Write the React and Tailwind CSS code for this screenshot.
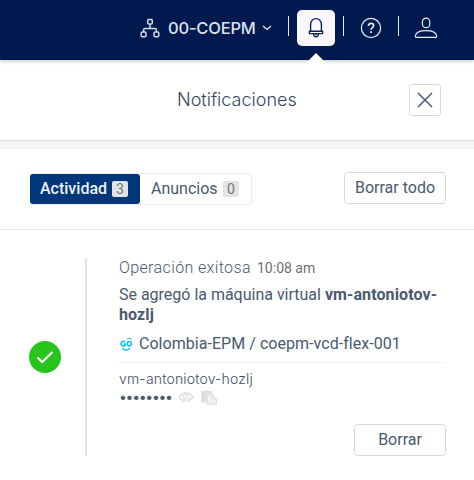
import React from "react";

function OrgIcon() {
  return (
    <svg className="h-5 w-5" viewBox="0 0 20 20" fill="none" stroke="#d6dae6" strokeWidth="1.5">
      <rect x="7.7" y="1.500" width="4.6" height="4.6" rx="1" />
      <rect x="1.2" y="14" width="4.8" height="4.8" rx="1.2" />
      <rect x="14" y="14" width="4.8" height="4.8" rx="1.2" />
      <path d="M10 6.100v4.2M3.6 14v-2c0-1 .5-1.5 1.500-1.500h9.800c1 0 1.500.5 1.500 1.500v2" />
    </svg>
  );
}

function BellIcon() {
  return (
    <svg className="h-[22px] w-4" viewBox="0 0 16 22" fill="none" stroke="#0c2457" strokeWidth="1.400">
      <path d="M2.600 14V7a5.400 5.400 0 0 1 10.800 0v7" />
      <rect x="1.300" y="14.200" width="13.400" height="2.400" rx=".5" />
      <path d="M5.500 17c.2 1.800 1.200 2.800 2.500 2.800s2.300-1 2.500-2.800" />
      <path d="M8 17v1.200" />
    </svg>
  );
}

function HelpIcon() {
  return (
    <svg className="h-[22px] w-[22px]" viewBox="0 0 22 22" fill="none" stroke="#e9ebf2">
      <circle cx="11" cy="11" r="9.600" strokeWidth="1.200" />
      <path d="M8.400 8.900c0-1.600 1.100-2.500 2.600-2.500s2.600.9 2.600 2.200c0 2-2.500 2-2.500 4.200" strokeWidth="1.700" />
      <path d="M11.100 14.300v1.700" strokeWidth="1.800" />
    </svg>
  );
}

function UserIcon() {
  return (
    <svg className="h-[22px] w-6" viewBox="0 0 24 22" fill="none" stroke="#e9ebf2" strokeWidth="1.200">
      <rect x="8.400" y="1.200" width="7.400" height="9.400" rx="3.700" />
      <path d="M2.200 20.300c-.7 0-.9-.5-.8-1.300.4-3.600 4.800-5.400 10.600-5.400s10.200 1.800 10.600 5.400c.1.800-.1 1.300-.8 1.300z" />
    </svg>
  );
}

function GoIcon() {
  return (
    <svg className="h-4 w-[14px] shrink-0" viewBox="0 0 14 16" fill="none" stroke="#10c4f6" strokeWidth="1.500">
      <path d="M6.200 6C4.500 4.700 2 5.300 2 7.800c0 2.600 3 2.900 4.200 1.900V8H4.300" />
      <ellipse cx="10.300" cy="7.800" rx="2.100" ry="2.200" />
      <path d="M8.200 3.600c.9-1.900 3.400-1.900 4.300 0" strokeWidth="1.100" />
      <path d="M3.500 12.100c1.900 2.600 5.500 2.600 7.400 0" strokeWidth="1.600" />
    </svg>
  );
}

function HiddenIcon() {
  return (
    <svg className="h-[14px] w-4 shrink-0" viewBox="0 0 16 14" fill="none" stroke="#dedede">
      <path d="M6.500 11.200C4.200 10.700 2.300 9.200 1.200 7c1.600-2.700 4-4 6.800-4h1M11 3.800c1.500.7 2.800 1.800 3.800 3.200-1.300 2.400-3.400 3.800-6 4.200" strokeWidth="1.500" />
      <path d="M8.400 4.200C5.500 4.200 4.300 7 6.500 9.200M11 6.500c.2 1.500-.4 2.500-1.700 3.100" strokeWidth="1.200" />
      <path d="M11 1.500L5.500 12.500" strokeWidth="1.200" />
    </svg>
  );
}

function PasteIcon() {
  return (
    <svg className="h-[15px] w-4" viewBox="0 0 16 15">
      <path fill="#dedede" d="M1.200 1h3.100c.3-1 2.900-1 3.200 0h3.100c.5 0 .9.400.9.900V4H7c-1 0-1.500.5-1.500 1.500V12.500H1.200c-.5 0-.9-.4-.9-.9V1.900C.3 1.400.7 1 1.200 1z" />
      <path fill="#f4f4f4" stroke="#dedede" strokeWidth="1.200" strokeLinejoin="round" d="M6.400 5.200h5.200l3.600 3.600v5.300H6.400zM11.400 5.200v3.800h3.800" />
    </svg>
  );
}

function Divider() {
  return <span className="mt-4 h-5 w-px shrink-0 bg-[#e8eaf0]" />;
}

export default function App() {
  return (
    <div className="h-[480px] w-[474px] overflow-hidden bg-white font-['Roboto',sans-serif] whitespace-nowrap text-[#485970]">
      <header className="relative z-10 flex h-[60px] items-start bg-[#00194f] shadow-[0_1px_4px_rgba(0,0,0,0.25)]">
        <div className="mt-[18px] ml-[140px] flex w-[148px] items-center">
          <OrgIcon />
          <span className="ml-2 w-[94px] font-['Inter',sans-serif] text-[16.500px] leading-5 font-medium tracking-[-0.200px] text-[#dfe2ec]">00-COEPM</span>
          <svg className="h-2 w-[10px]" viewBox="0 0 10 8" fill="none" stroke="#e9ebf2" strokeWidth="1.300">
            <path d="M1 2l4 3.500L9 2" />
          </svg>
        </div>
        <Divider />
        <button className="relative mt-[10px] ml-2 flex h-9 w-[38px] items-center justify-center rounded-[5px] bg-[#faf8fc]">
          <BellIcon />
          <svg className="absolute top-[43px] left-[5px] h-3 w-7" viewBox="0 0 28 12" fill="white">
            <path d="M14 0L26 12H2z" />
          </svg>
        </button>
        <div className="ml-2 flex"><Divider /></div>
        <div className="mt-[17px] ml-4"><HelpIcon /></div>
        <div className="ml-4 flex"><Divider /></div>
        <div className="mt-[17px] ml-[15px]"><UserIcon /></div>
      </header>

      <section className="flex h-[81px] items-start border-b border-[#dcdee1]">
        <h1 className="mt-7 ml-[177px] w-[232px] font-['Inter',sans-serif] text-[18px] leading-6 font-light text-[#34465f]">Notificaciones</h1>
        <button className="mt-6 flex h-8 w-8 items-center justify-center rounded-[3px] border border-[#d6d8dc]">
          <svg className="h-4 w-4" viewBox="0 0 16 16" stroke="#485970" strokeWidth="1.500">
            <path d="M1 1l14 14M15 1L1 15" />
          </svg>
        </button>
      </section>
      <div className="h-2 bg-[#f1f3f6]" />

      <section className="flex h-[81px] items-start border-b border-[#e3e4e6] pt-[23px] pl-[30px]">
        <div className="mt-px flex h-8 w-[222px] items-start rounded-[4px] border border-l-0 border-[#ececee]">
          <button className="flex h-[30px] w-[110px] items-center rounded-[3px] bg-[#00377b] pl-[10px] text-left text-[16px] font-medium text-[#eef2f7]">
            <span className="w-[72px]">Actividad</span>
            <span className="h-4 w-4 rounded-[2px] bg-[#e4e4e4] text-center text-[14px] leading-4 font-normal text-[#6c7480]">3</span>
          </button>
          <button className="flex h-[30px] items-center pl-[11px] text-left text-[16px]">
            <span className="w-[72px]">Anuncios</span>
            <span className="h-4 w-4 rounded-[2px] bg-[#e4e4e4] text-center text-[14px] leading-4 text-[#6c7480]">0</span>
          </button>
        </div>
        <button className="ml-[92px] h-8 w-[102px] rounded-[4px] border border-[#dbdcdf] text-[16px] leading-[30px]">Borrar todo</button>
      </section>

      <article className="flex items-start pt-7 pl-[29px]">
        <div className="flex h-[198px] w-[58px] items-center border-r-2 border-[#e3e4e5]">
          <span className="flex h-8 w-8 items-center justify-center rounded-full bg-[#27c41c]">
            <svg className="h-4 w-[18px]" viewBox="0 0 18 16" fill="none" stroke="white" strokeWidth="2.200">
              <path d="M1.500 8.500l4.700 4.500L16.500 3" />
            </svg>
          </span>
        </div>
        <div className="ml-8 w-[327px]">
          <p className="flex h-5 items-baseline leading-5">
            <span className="w-[138px] text-[16px] font-[350] tracking-[0.380px]">Operación exitosa</span>
            <span className="text-[14px] text-[#707070]">10:08 am</span>
          </p>
          <p className="mt-[7px] text-[16px] leading-5 tracking-[-0.010px]">
            Se agregó la máquina virtual <b className="font-bold tracking-[0.100px]">vm-antoniotov-<br />hozlj</b>
          </p>
          <div className="mt-[9px] flex h-5 items-center">
            <GoIcon />
            <span className="ml-[6px] text-[16px] leading-5 tracking-[0.040px]">Colombia-EPM / coepm-vcd-flex-001</span>
          </div>
          <div className="mt-2 border-t border-[#f1f1f2] pt-[7px]">
            <p className="font-['Inter',sans-serif] text-[14px] leading-[18px] font-light tracking-[0.180px] text-[#3d4e66]">vm-antoniotov-hozlj</p>
            <div className="flex h-[18px] items-center">
              <span className="w-[59px] shrink-0 font-['Inter',sans-serif] text-[14px] leading-[16px] tracking-[-1.300px]">••••••••</span>
              <HiddenIcon />
              <span className="ml-[7px]"><PasteIcon /></span>
            </div>
          </div>
          <button className="mt-[18px] ml-[235px] h-8 w-[92px] rounded-[4px] border border-[#dbdcdf] text-[16px] leading-[30px]">Borrar</button>
        </div>
      </article>
    </div>
  );
}
